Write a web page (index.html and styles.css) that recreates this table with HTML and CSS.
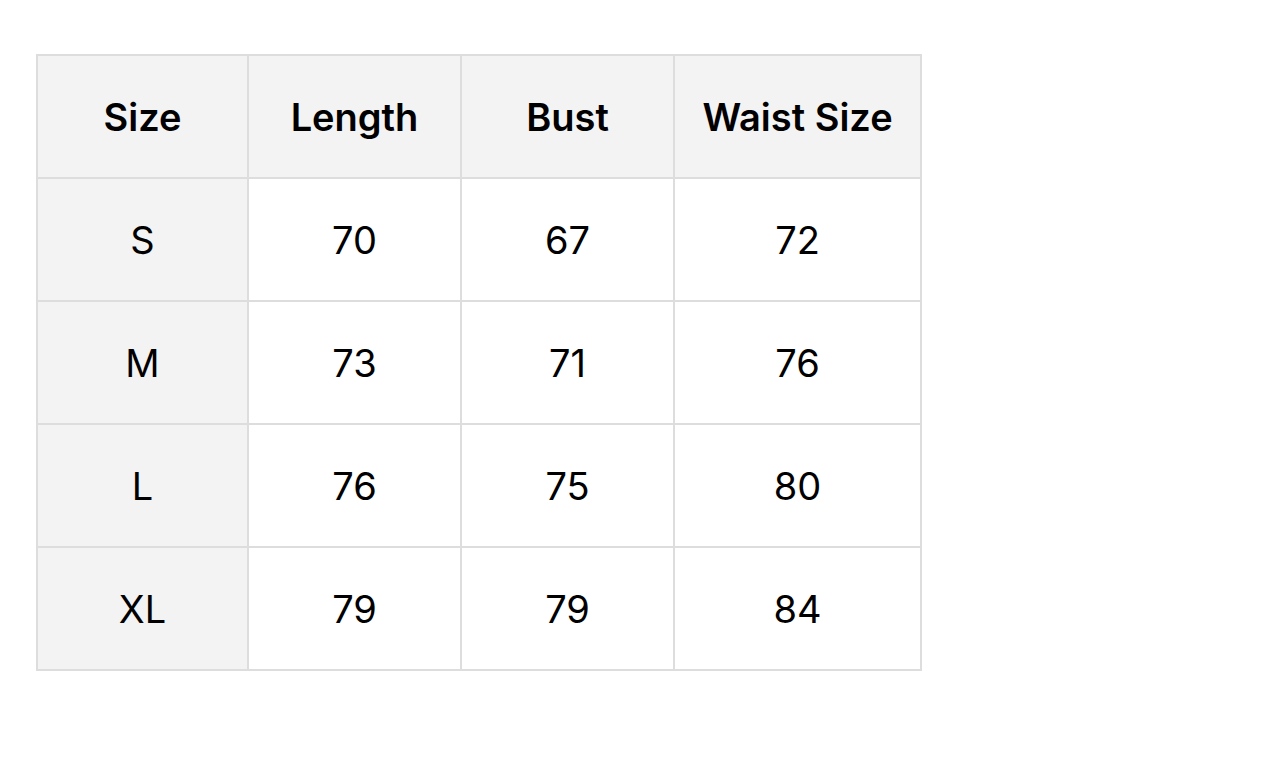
FILE: index.html
```html
<!DOCTYPE html>
<html>
<head>
<meta charset="utf-8">
<link rel="stylesheet" href="styles.css">
</head>
<body>
<table class="size-table">
  <colgroup>
    <col class="c1"><col class="c2"><col class="c3"><col class="c4">
  </colgroup>
  <thead>
    <tr><th>Size</th><th>Length</th><th>Bust</th><th>Waist Size</th></tr>
  </thead>
  <tbody>
    <tr><td class="label">S</td><td>70</td><td>67</td><td>72</td></tr>
    <tr><td class="label">M</td><td>73</td><td>71</td><td>76</td></tr>
    <tr><td class="label">L</td><td>76</td><td>75</td><td>80</td></tr>
    <tr><td class="label">XL</td><td>79</td><td>79</td><td>84</td></tr>
  </tbody>
</table>
</body>
</html>
```
FILE: styles.css
```css
html, body {
  margin: 0;
  background: #ffffff;
}
body {
  padding: 54px 0 0 36px;
  font-family: Inter, "Liberation Sans", sans-serif;
  color: #000;
}
.size-table {
  border-collapse: collapse;
  table-layout: fixed;
  width: 884px;
}
.c1 { width: 211px; }
.c2 { width: 213px; }
.c3 { width: 213px; }
.c4 { width: 247px; }
.size-table th,
.size-table td {
  border: 2px solid #dddddd;
  height: 121px;
  padding: 0;
  text-align: center;
  vertical-align: middle;
  font-size: 38px;
  line-height: 1;
}
.size-table th {
  background: #f3f3f3;
  font-weight: 600;
}
.size-table td {
  font-weight: 400;
}
.size-table td.label {
  background: #f3f3f3;
}
```
